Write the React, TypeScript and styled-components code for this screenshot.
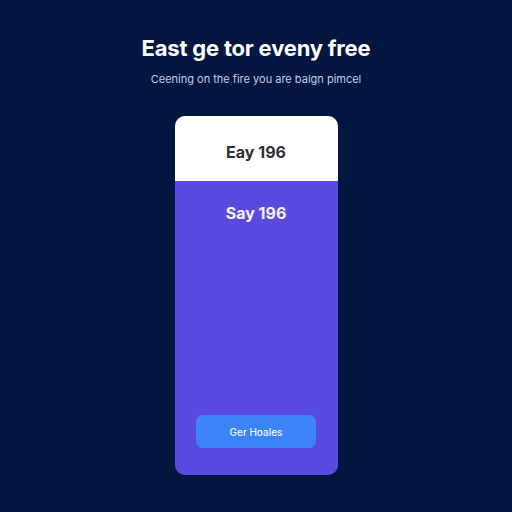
import React from "react";
import styled, { createGlobalStyle } from "styled-components";

const GlobalStyle = createGlobalStyle`
  html, body {
    margin: 0;
    padding: 0;
    background: #031640;
  }
  body {
    font-family: Inter, "Liberation Sans", sans-serif;
  }
`;

const Page = styled.main`
  width: 512px;
  height: 512px;
  background: #031640;
  display: flex;
  flex-direction: column;
  align-items: center;
  box-sizing: border-box;
  padding-top: 34px;
`;

const Title = styled.h1`
  margin: 0;
  color: #ffffff;
  font-size: 22px;
  font-weight: 700;
  letter-spacing: -0.2px;
  line-height: 28px;
`;

const Subtitle = styled.p`
  margin: 10px 0 0;
  color: #c4cde6;
  font-size: 11px;
  line-height: 14px;
`;

const Card = styled.section`
  margin-top: 30px;
  width: 163px;
  height: 359px;
  border-radius: 10px;
  overflow: hidden;
  display: flex;
  flex-direction: column;
  background: #5a4ae0;
`;

const CardHead = styled.div`
  height: 65px;
  box-sizing: border-box;
  padding-top: 6px;
  background: #ffffff;
  display: flex;
  align-items: center;
  justify-content: center;
`;

const Price = styled.span<{ $light?: boolean }>`
  font-size: 16px;
  font-weight: 700;
  color: ${(p) => (p.$light ? "#f4f3ff" : "#2f2f35")};
`;

const CardBody = styled.div`
  flex: 1;
  display: flex;
  flex-direction: column;
  align-items: center;
  padding-top: 22px;
  padding-bottom: 27px;
`;

const Spacer = styled.div`
  flex: 1;
`;

const Button = styled.button`
  width: 120px;
  height: 33px;
  border: none;
  border-radius: 7px;
  background: #3a84f8;
  color: #f2f6ff;
  font-family: Inter, "Liberation Sans", sans-serif;
  font-size: 10px;
  font-weight: 500;
  cursor: pointer;
`;

export default function App() {
  return (
    <>
      <GlobalStyle />
      <Page>
        <Title>East ge tor eveny free</Title>
        <Subtitle>Ceening on the fire you are balgn pimcel</Subtitle>
        <Card>
          <CardHead>
            <Price>Eay 196</Price>
          </CardHead>
          <CardBody>
            <Price $light>Say 196</Price>
            <Spacer />
            <Button>Ger Hoales</Button>
          </CardBody>
        </Card>
      </Page>
    </>
  );
}
